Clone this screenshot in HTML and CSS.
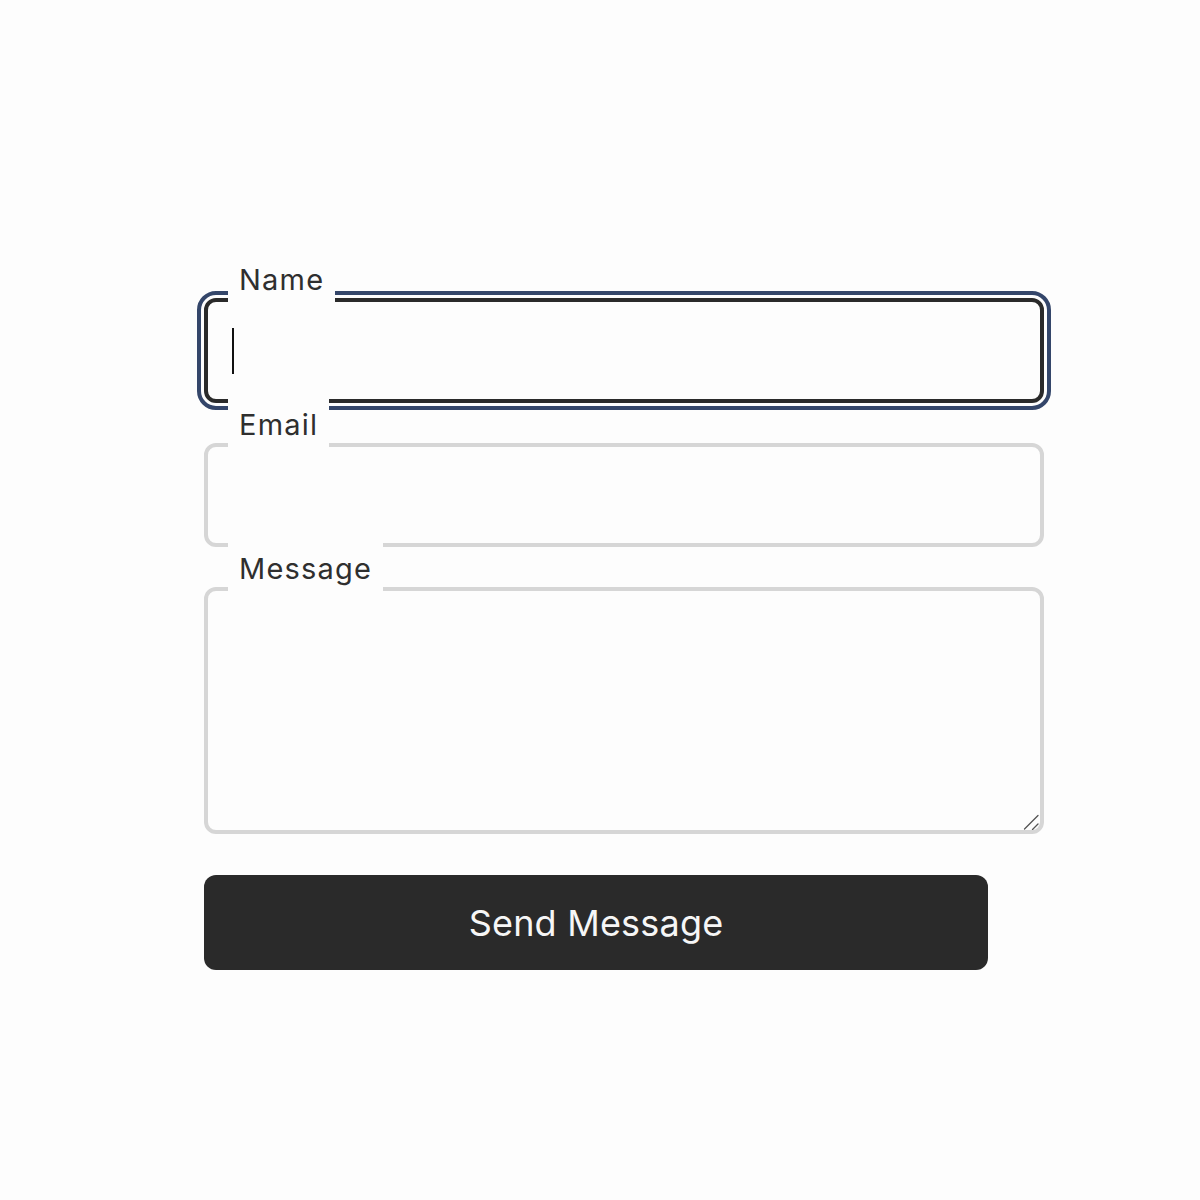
FILE: index.html
```html
<!DOCTYPE html>
<html lang="en">
<head>
<meta charset="utf-8">
<title>Contact</title>
<link rel="stylesheet" href="styles.css">
</head>
<body>
<main class="page">
  <form class="form" onsubmit="return false">
    <div class="field">
      <label class="field-label" for="name">Name</label>
      <input class="control control-focused" id="name" type="text">
      <span class="caret"></span>
    </div>
    <div class="field">
      <label class="field-label" for="email">Email</label>
      <input class="control" id="email" type="email">
    </div>
    <div class="field">
      <label class="field-label" for="message">Message</label>
      <textarea class="control control-area" id="message"></textarea>
      <svg class="grip" width="16" height="16" viewBox="0 0 16 16" aria-hidden="true">
        <line x1="1.5" y1="15" x2="15" y2="1.5" />
        <line x1="9.5" y1="15.5" x2="15" y2="10" />
      </svg>
    </div>
    <button class="submit" type="submit">Send Message</button>
  </form>
</main>
</body>
</html>
```

FILE: styles.css
```css
* { box-sizing: border-box; }

html, body {
  margin: 0;
  background: #fdfdfd;
}

body {
  font-family: Inter, "Liberation Sans", sans-serif;
  color: #2e2e2e;
}

.page {
  padding: 298px 0 0 204px;
}

.form {
  width: 840px;
  display: flex;
  flex-direction: column;
  gap: 40px;
}

.field {
  position: relative;
}

.field-label {
  position: absolute;
  left: 24px;
  top: -45px;
  height: 52px;
  padding: 2px 11px 0;
  line-height: 50px;
  background: #fdfdfd;
  font-size: 29px;
  font-weight: 380;
  letter-spacing: 1.2px;
  color: #2f2f2f;
  z-index: 2;
}

.control {
  display: block;
  width: 100%;
  height: 104px;
  margin: 0;
  padding: 0 24px;
  border: 4px solid #d6d6d6;
  border-radius: 12px;
  background: #fdfdfd;
  font-family: inherit;
  font-size: 36px;
  color: #2a2a2a;
  outline: none;
  caret-color: transparent;
}

.control-focused {
  height: 105px;
  border-color: #2a2a2a;
  outline: 4px solid #34466a;
  outline-offset: 3px;
}

.control-area {
  height: 247px;
  resize: none;
}

.grip {
  position: absolute;
  right: 5px;
  bottom: 4px;
  stroke: #555;
  stroke-width: 1.3;
  stroke-linecap: round;
}

.caret {
  position: absolute;
  left: 28px;
  top: 30px;
  width: 2px;
  height: 46px;
  background: #111;
}

.submit {
  width: 784px;
  height: 95px;
  margin-top: 1px;
  border: none;
  border-radius: 12px;
  background: #2a2a2a;
  color: #f6f6f6;
  font-family: inherit;
  font-size: 36px;
  font-weight: 370;
  letter-spacing: 0.2px;
  cursor: pointer;
}
```
